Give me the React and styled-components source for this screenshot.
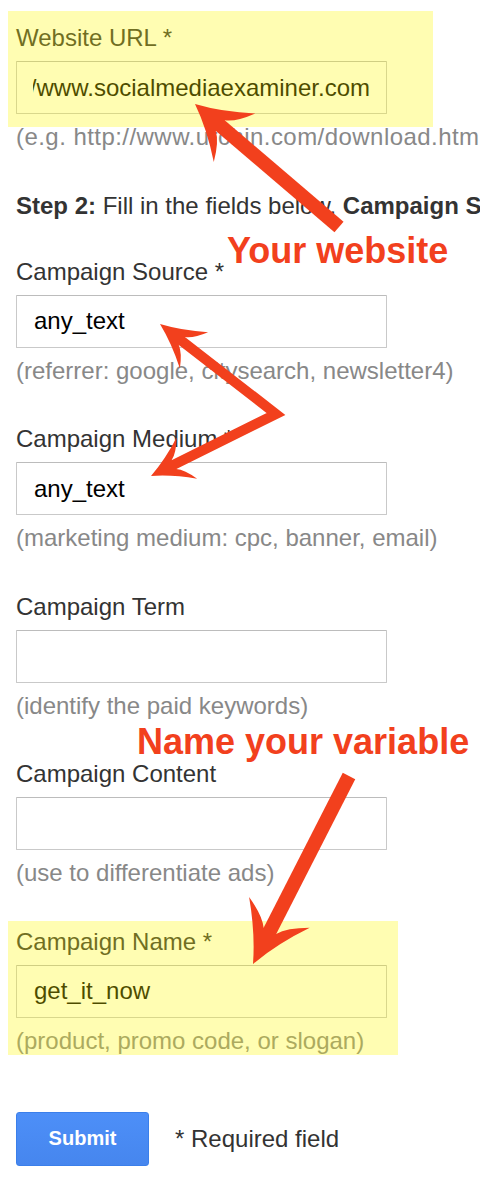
import styled, { createGlobalStyle } from "styled-components";

const RED = "#f2401d";

function App() {
  return (
    <>
      <GlobalStyle />
      <Page>
        <Field>
          <Highlight $top={-13} $left={-8} $right={47} $bottom={-13}>
            <Label>Website URL *</Label>
            <UrlBox>
              <UrlClip>
                <span>http://www.socialmediaexaminer.com</span>
              </UrlClip>
            </UrlBox>
          </Highlight>
          <Hint $spacing={0.45}>(e.g. http://www.urchin.com/download.html)</Hint>
        </Field>

        <StepLine>
          <b>Step 2:</b> Fill in the fields below. <b>Campaign Source</b>,{" "}
          <b>Campaign Medium</b> and <b>Campaign Name</b> should always be used.
        </StepLine>

        <Field>
          <Label>Campaign Source *</Label>
          <Input readOnly defaultValue="any_text" />
          <Hint>(referrer: google, citysearch, newsletter4)</Hint>
        </Field>

        <Field>
          <Label>Campaign Medium *</Label>
          <Input readOnly defaultValue="any_text" />
          <Hint>(marketing medium: cpc, banner, email)</Hint>
        </Field>

        <Field>
          <Label>Campaign Term</Label>
          <Input readOnly defaultValue="" />
          <Hint>(identify the paid keywords)</Hint>
        </Field>

        <Field>
          <Label>Campaign Content</Label>
          <Input readOnly defaultValue="" />
          <Hint>(use to differentiate ads)</Hint>
        </Field>

        <Field $last>
          <Highlight $top={-7} $left={-8} $right={82} $bottom={0}>
            <Label>Campaign Name *</Label>
            <Input readOnly defaultValue="get_it_now" />
            <Hint>(product, promo code, or slogan)</Hint>
          </Highlight>
        </Field>

        <Footer>
          <SubmitButton type="button">Submit</SubmitButton>
          <Required>* Required field</Required>
        </Footer>

        <Arrows />
        <Note $x={227} $y={233}>Your website</Note>
        <Note $x={137} $y={724}>Name your variable</Note>
      </Page>
    </>
  );
}

// arrow head with slightly concave sides, pointing from tail to tip
function headPath(tip, tail, h, b, w) {
  const dx = tip[0] - tail[0];
  const dy = tip[1] - tail[1];
  const len = Math.hypot(dx, dy);
  const ux = dx / len;
  const uy = dy / len;
  const nx = -uy;
  const ny = ux;
  const pt = (back, side) =>
    `${(tip[0] - ux * back + nx * side).toFixed(1)},${(tip[1] - uy * back + ny * side).toFixed(1)}`;
  return [
    `M${pt(0, 0)}`,
    `Q${pt(0.5 * h, 0.36 * b)} ${pt(h, b)}`,
    `Q${pt(0.82 * h, 0.4 * b)} ${pt(0.64 * h, w)}`,
    `L${pt(0.64 * h, -w)}`,
    `Q${pt(0.82 * h, -0.4 * b)} ${pt(h, -b)}`,
    `Q${pt(0.5 * h, -0.36 * b)} ${pt(0, 0)}`,
    "Z",
  ].join(" ");
}

function neck(tip, tail, back) {
  const dx = tip[0] - tail[0];
  const dy = tip[1] - tail[1];
  const len = Math.hypot(dx, dy);
  return [tip[0] - (dx / len) * back, tip[1] - (dy / len) * back];
}

function Arrows() {
  const a1 = { tip: [195, 104], tail: [339, 227] };
  const a3 = { tip: [253, 964], tail: [349, 776] };
  const v = [276, 414];
  const t2a = [160, 324];
  const t2b = [151, 476];

  const n1 = neck(a1.tip, a1.tail, 30);
  const n3 = neck(a3.tip, a3.tail, 34);
  const n2a = neck(t2a, v, 24);
  const n2b = neck(t2b, v, 22);

  return (
    <Overlay width="480" height="1178" viewBox="0 0 480 1178">
      <line x1={a1.tail[0]} y1={a1.tail[1]} x2={n1[0]} y2={n1[1]} stroke={RED} strokeWidth="14" />
      <path d={headPath(a1.tip, a1.tail, 52, 32, 7)} fill={RED} />

      <polyline
        points={`${n2a[0]},${n2a[1]} ${v[0]},${v[1]} ${n2b[0]},${n2b[1]}`}
        fill="none"
        stroke={RED}
        strokeWidth="10"
        strokeLinejoin="miter"
      />
      <path d={headPath(t2a, v, 43, 23, 5)} fill={RED} />
      <path d={headPath(t2b, v, 40, 23, 5)} fill={RED} />

      <line x1={a3.tail[0]} y1={a3.tail[1]} x2={n3[0]} y2={n3[1]} stroke={RED} strokeWidth="14" />
      <path d={headPath(a3.tip, a3.tail, 58, 34, 7)} fill={RED} />
    </Overlay>
  );
}

const GlobalStyle = createGlobalStyle`
  body {
    margin: 0;
    background: #fff;
    overflow: hidden;
    font-family: "Liberation Sans", Arial, Helvetica, sans-serif;
  }
`;

const Page = styled.div`
  position: relative;
  width: 480px;
  height: 1178px;
  box-sizing: border-box;
  padding: 24px 0 0 16px;
  overflow: hidden;
`;

const Field = styled.div`
  display: flex;
  flex-direction: column;
  gap: 9px;
  margin-bottom: ${(p) => (p.$last ? "0" : "40.5px")};
`;

const Highlight = styled.div`
  position: relative;
  display: flex;
  flex-direction: column;
  gap: 9px;

  &::after {
    content: "";
    position: absolute;
    top: ${(p) => p.$top}px;
    left: ${(p) => p.$left}px;
    right: ${(p) => p.$right}px;
    bottom: ${(p) => p.$bottom}px;
    background: rgba(255, 250, 0, 0.3);
    pointer-events: none;
  }
`;

const Label = styled.div`
  font-size: 24px;
  line-height: 28px;
  color: #333;
  white-space: nowrap;
`;

const Hint = styled.div`
  font-size: 24px;
  line-height: 28px;
  color: #888;
  white-space: nowrap;
  letter-spacing: ${(p) => p.$spacing || 0}px;
`;

const Input = styled.input`
  display: block;
  width: 371px;
  height: 53px;
  box-sizing: border-box;
  margin: 0;
  padding: 0 17px;
  border: 1px solid #c9c9c9;
  border-top-color: #bcbcbc;
  border-radius: 1px;
  background: #fff;
  font-family: inherit;
  font-size: 24px;
  color: #000;
  outline: none;
`;

const UrlBox = styled.div`
  display: flex;
  align-items: center;
  width: 371px;
  height: 53px;
  box-sizing: border-box;
  padding: 0 16px 0 16px;
  border: 1px solid #c9c9c9;
  border-top-color: #bcbcbc;
  border-radius: 1px;
  background: #fff;
  font-size: 24px;
  color: #000;
`;

const UrlClip = styled.div`
  flex: 1;
  min-width: 0;
  display: flex;
  justify-content: flex-end;
  overflow: hidden;
  white-space: nowrap;

  span {
    flex-shrink: 0;
  }
`;

const StepLine = styled.p`
  margin: 0 0 38px;
  font-size: 24px;
  line-height: 28px;
  color: #333;
  white-space: nowrap;

  b {
    font-weight: bold;
  }
`;

const Footer = styled.div`
  display: flex;
  align-items: center;
  gap: 26px;
  margin-top: 57px;
`;

const SubmitButton = styled.button`
  width: 133px;
  height: 54px;
  box-sizing: border-box;
  border: 1px solid #3b7fea;
  border-radius: 3px;
  background: linear-gradient(#4d8ff8, #4686ee);
  color: #fff;
  font-family: inherit;
  font-size: 20px;
  font-weight: bold;
  padding: 0;
`;

const Required = styled.span`
  font-size: 24px;
  color: #333;
`;

const Overlay = styled.svg`
  position: absolute;
  top: 0;
  left: 0;
  pointer-events: none;
`;

const Note = styled.div`
  position: absolute;
  left: ${(p) => p.$x}px;
  top: ${(p) => p.$y}px;
  font-size: 36px;
  line-height: 36px;
  font-weight: bold;
  color: ${RED};
  white-space: nowrap;
`;

export default App;
